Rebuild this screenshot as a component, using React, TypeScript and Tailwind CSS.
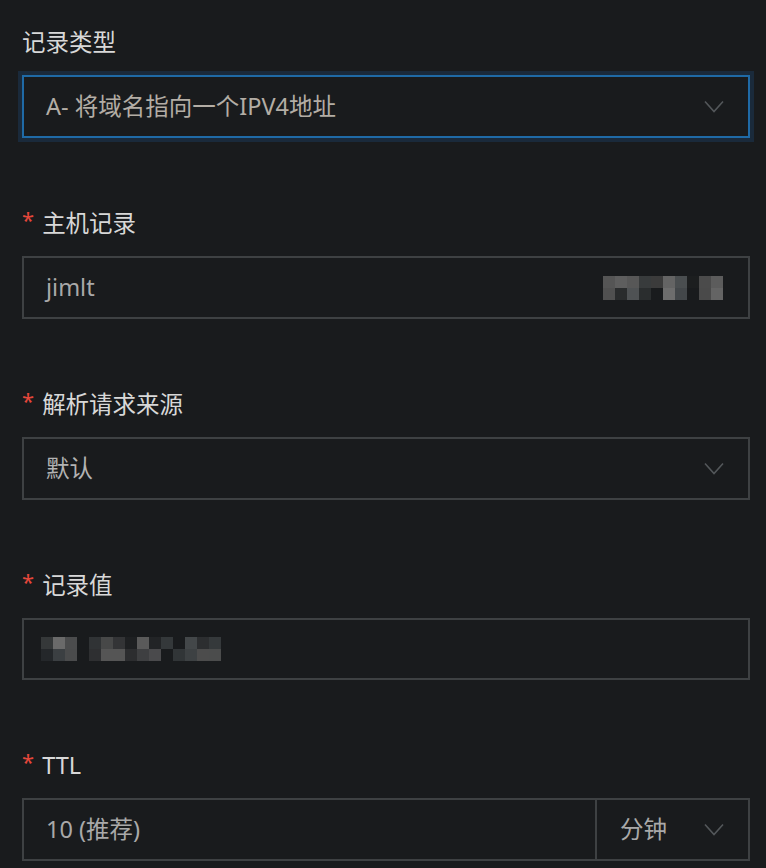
import type { ReactNode } from "react";

const FONT = {
  fontFamily: '"Noto Sans", "Noto Sans CJK SC", sans-serif',
};

const HOST_MOSAIC = [
  ["#555555", "#5e5e5e", "#575757", "#383b3c", "#3b3b3b", "#646464", "#4a4e50", "#1c1e1f", "#4b4b4b", "#5c5c5c"],
  ["#505050", "#2a2c2d", "#4f5254", "#2a2d2e", "#191b1d", "#6d6d6d", "#43474a", "#191b1d", "#4a4a4a", "#646464"],
];

const VALUE_MOSAIC = [
  ["#353839", "#6a6a6a", "#4b4c4d", "#191b1d", "#303335", "#474848", "#333436", "#1e2022", "#5a5a5a", "#222426", "#34383a", "#191b1d", "#434749", "#2c2e30", "#35393b"],
  ["#24272a", "#3b3f42", "#4a4b4c", "#191b1d", "#2e2f31", "#555555", "#555555", "#2c2d2f", "#3e3f41", "#4a4a4c", "#191b1d", "#313537", "#3d4143", "#4c4c4c", "#4b4c4c"],
];

const Mosaic = ({ rows }: { rows: string[][] }) => (
  <div className="flex flex-col">
    {rows.map((row, r) => (
      <div key={r} className="flex">
        {row.map((c, i) => (
          <span key={i} className="h-3 w-3" style={{ background: c }} />
        ))}
      </div>
    ))}
  </div>
);

const Chevron = () => (
  <svg width="20" height="13" viewBox="0 0 20 13" fill="none" className="shrink-0">
    <path d="M1 1.5 L10 11.5 L19 1.5" stroke="#53575a" strokeWidth="1.6" />
  </svg>
);

const Field = ({
  label,
  required,
  children,
}: {
  label: string;
  required?: boolean;
  children: ReactNode;
}) => (
  <div className="flex flex-col">
    <div className="flex h-8 items-center leading-8 text-[23.5px] text-[#d8d8d8]">
      {required && (
        <span className="mr-[8px] -mt-2 text-[22px] text-[#e5473b]">*</span>
      )}
      {label}
    </div>
    <div className="mt-[17px]">{children}</div>
  </div>
);

export default function App() {
  return (
    <div
      className="min-h-[868px] w-[766px] bg-[#191b1d] pl-[22px] pr-[16px] pt-[26px]"
      style={FONT}
    >
      <div className="flex flex-col gap-[69px]">
        <Field label="记录类型">
          <div className="flex h-[63px] items-center justify-between border-2 border-[#1f6aa6] pl-[22px] pr-[24px] shadow-[0_0_0_4px_#1a2a3b]">
            <span className="text-[23.5px] text-[#b3ada5]">A- 将域名指向一个IPV4地址</span>
            <Chevron />
          </div>
        </Field>

        <Field label="主机记录" required>
          <div className="flex h-[63px] items-center justify-between border-2 border-[#3e4143] pl-[22px] pr-[25px]">
            <span className="text-[23.5px] text-[#a9a9a9]">jimlt</span>
            <Mosaic rows={HOST_MOSAIC} />
          </div>
        </Field>

        <Field label="解析请求来源" required>
          <div className="flex h-[63px] items-center justify-between border-2 border-[#3e4143] pl-[22px] pr-[24px]">
            <span className="text-[23.5px] text-[#b3b3b3]">默认</span>
            <Chevron />
          </div>
        </Field>

        <Field label="记录值" required>
          <div className="flex h-[62px] items-center border-2 border-[#3e4143] pl-[17px]">
            <Mosaic rows={VALUE_MOSAIC} />
          </div>
        </Field>

        <Field label="TTL" required>
          <div className="flex h-[63px] border-2 border-[#3e4143]">
            <div className="flex flex-1 items-center border-r-2 border-[#3e4143] pl-[22px] text-[23.5px] text-[#a9a9a9]">
              10 (推荐)
            </div>
            <div className="flex w-[151px] items-center justify-between pl-[23px] pr-[24px]">
              <span className="text-[23.5px] text-[#a9a9a9]">分钟</span>
              <Chevron />
            </div>
          </div>
        </Field>
      </div>
    </div>
  );
}
